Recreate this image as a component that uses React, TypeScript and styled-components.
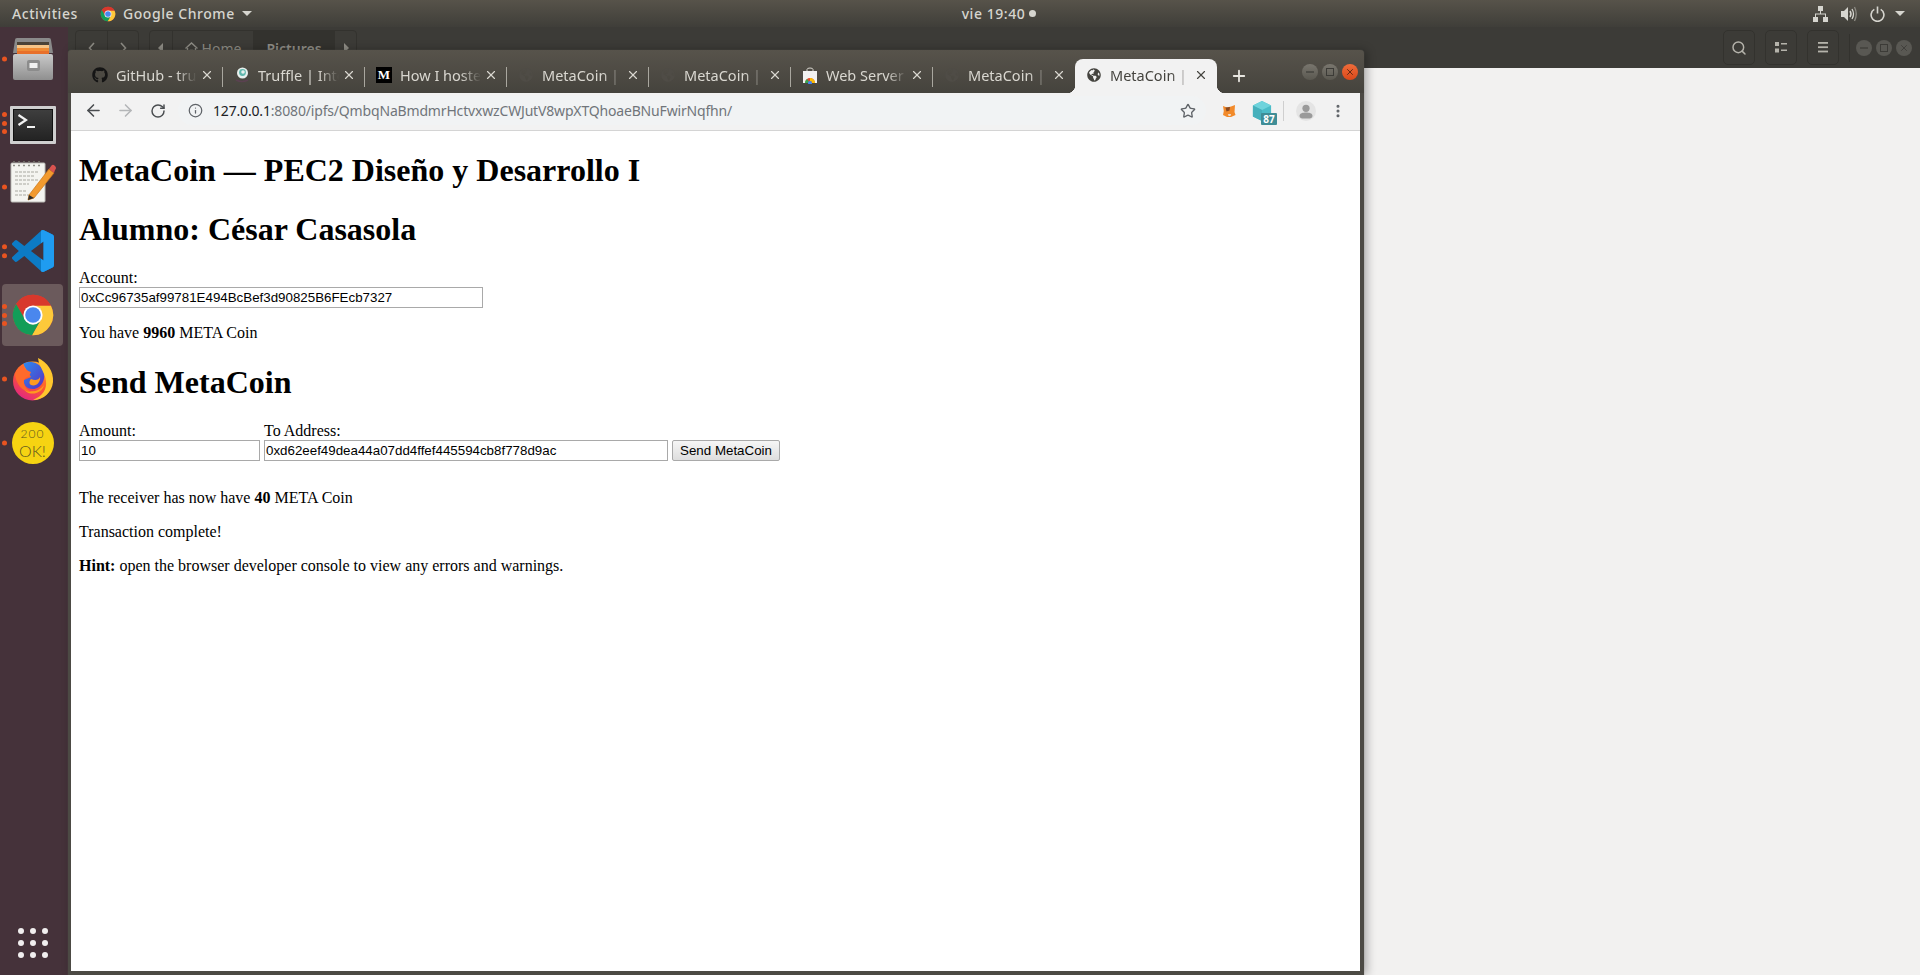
import { createGlobalStyle, styled } from 'styled-components';
import { FaGithub, FaGlobeAmericas } from 'react-icons/fa';
import { ArrowLeft, ArrowRight, RotateCw, Info, Star, X, Plus, Search, MoreVertical } from 'lucide-react';

const GlobalStyle = createGlobalStyle`
  html, body {
    margin: 0;
    padding: 0;
    height: 100%;
    overflow: hidden;
    background: #3c3b37;
  }
`

const UI_FONT = `"Noto Sans", Roboto, "Liberation Sans", sans-serif`

const Screen = styled.div`
  width: 1920px;
  height: 975px;
  display: flex;
  flex-direction: column;
  overflow: hidden;
  font-family: ${UI_FONT};
`

const TopBar = styled.div`
  height: 27px;
  flex: none;
  display: grid;
  grid-template-columns: 1fr auto 1fr;
  align-items: center;
  padding: 0 12px;
  background: linear-gradient(#57534a, #3f3e39);
  color: #d6d5cf;
  font-size: 14px;
  font-weight: 500;
  letter-spacing: 0.55px;
`

const TopLeft = styled.div`
  display: flex;
  align-items: center;
  gap: 7px;
`

const ActivitiesLabel = styled.span`
  width: 81px;
`

const TopCenter = styled.div`
  display: flex;
  align-items: center;
  gap: 4px;
  margin-left: 78px;
`

const RecordDot = styled.span`
  width: 7px;
  height: 7px;
  border-radius: 50%;
  background: #d6d5cf;
`

const TopRight = styled.div`
  display: flex;
  align-items: center;
  justify-content: flex-end;
  gap: 13px;
`

const Caret = styled.span`
  width: 0;
  height: 0;
  border-left: 5px solid transparent;
  border-right: 5px solid transparent;
  border-top: 5px solid #d6d5cf;
`

const TrayCaret = styled(Caret)`
  margin-left: -3px;
  margin-right: 3px;
`

const Desktop = styled.div`
  flex: 1;
  display: flex;
  min-height: 0;
`

const Dock = styled.nav`
  width: 68px;
  flex: none;
  display: flex;
  flex-direction: column;
  align-items: flex-start;
  padding-left: 2px;
  box-sizing: border-box;
  background: #45323a;
`

const DockItem = styled.div<{ $active?: boolean }>`
  position: relative;
  width: 61px;
  height: 62px;
  margin: 1px 0;
  flex: none;
  display: flex;
  align-items: center;
  justify-content: center;
  border-radius: 4px;
  background: ${p => (p.$active ? '#6b5a5c' : 'transparent')};
`

const DockIcon = styled.div<{ $shift?: number }>`
  display: flex;
  margin-top: ${p => p.$shift ?? 0}px;
`

const RunDots = styled.div`
  position: absolute;
  left: 0;
  top: 50%;
  transform: translateY(-50%);
  display: flex;
  flex-direction: column;
  gap: 3.5px;
`

const RunDot = styled.span`
  width: 5px;
  height: 5px;
  border-radius: 50%;
  background: #e95420;
`

const OkBadge = styled.div`
  width: 42px;
  height: 42px;
  border-radius: 50%;
  background: #f6d312;
  color: #5c5520;
  font-family: Lato, "Liberation Sans", sans-serif;
  font-weight: 300;
  display: flex;
  flex-direction: column;
  align-items: center;
  justify-content: center;
`

const OkSmall = styled.span`
  font-size: 12px;
  letter-spacing: 1px;
`

const OkBig = styled.span`
  font-size: 16px;
`

const AppGrid = styled.div`
  margin-top: auto;
  margin-bottom: 17px;
  margin-left: 16px;
  display: grid;
  grid-template-columns: repeat(3, 6px);
  gap: 6px;
`

const AppDot = styled.span`
  width: 6px;
  height: 6px;
  border-radius: 50%;
  background: #f1efef;
`

const DesktopArea = styled.main`
  position: relative;
  flex: 1;
  display: flex;
  flex-direction: column;
  min-width: 0;
`

const FilesHeader = styled.div`
  height: 41px;
  flex: none;
  display: flex;
  align-items: flex-start;
  padding: 3px 0 0 7px;
  box-sizing: border-box;
  background: #3c3b37;
`

const FilesGroup = styled.div<{ $gap?: number }>`
  height: 36px;
  display: flex;
  align-items: center;
  color: #8f8d86;
  font-size: 14px;
  margin-right: ${p => p.$gap ?? 0}px;
  border: 1px solid #33322e;
  border-radius: 4px;
  box-sizing: border-box;
`

const FilesCell = styled.div<{ $width: number; $selected?: boolean }>`
  width: ${p => p.$width}px;
  height: 100%;
  display: flex;
  align-items: center;
  justify-content: center;
  padding: 8px 0;
  box-sizing: border-box;
  gap: 4px;
  font-weight: ${p => (p.$selected ? 600 : 400)};
  background: ${p => (p.$selected ? '#33322e' : 'transparent')};
  border-left: 1px solid #33322e;
  &:first-child { border-left: none; }
`

const FilesTools = styled.div`
  margin-left: auto;
  display: flex;
  align-items: center;
  gap: 10px;
  padding-right: 8px;
`

const ToolButton = styled.div`
  width: 32px;
  height: 35px;
  display: flex;
  align-items: center;
  justify-content: center;
  border: 1px solid #33322e;
  border-radius: 5px;
  box-sizing: border-box;
`

const ToolDivider = styled.div`
  width: 1px;
  height: 28px;
  background: #33322e;
`

const FilesControls = styled.div`
  display: flex;
  gap: 4px;
  margin-left: -4px;
`

const FilesControl = styled.div`
  width: 16px;
  height: 16px;
  border-radius: 50%;
  background: #595853;
  display: flex;
  align-items: center;
  justify-content: center;
`

const FilesBody = styled.div`
  flex: 1;
  background: #f2f1f0;
`

const ChromeWindow = styled.section`
  position: absolute;
  left: 0;
  top: 23px;
  width: 1296px;
  height: 925px;
  display: flex;
  flex-direction: column;
  padding: 0 4px 4px 3px;
  box-sizing: border-box;
  background: linear-gradient(#57534b 0, #45433d 43px, #4c4a44 43px);
  border-radius: 4px 4px 0 0;
  box-shadow: 0 0 1px #6a675f, 3px 0 10px rgba(0, 0, 0, 0.3);
`

const TabStrip = styled.div`
  height: 43px;
  flex: none;
  display: flex;
  align-items: flex-end;
  padding-left: 10px;
`

const Tab = styled.div<{ $active?: boolean; $last?: boolean }>`
  position: relative;
  width: 142px;
  height: 34px;
  flex: none;
  display: flex;
  align-items: center;
  padding: 0 8px 2px 11px;
  box-sizing: border-box;
  border-radius: 8px 8px 0 0;
  background: ${p => (p.$active ? '#f2f2f2' : 'transparent')};
  color: ${p => (p.$active ? '#45443f' : '#d9d7d0')};
  font-size: 14.5px;
  &::after {
    content: '';
    display: ${p => (p.$active || p.$last ? 'none' : 'block')};
    position: absolute;
    right: 0;
    top: 8px;
    height: 20px;
    width: 1px;
    background: #a9a79f;
  }
  ${p => p.$active && `
    &::before {
      content: '';
      position: absolute;
      right: -8px;
      bottom: 0;
      width: 8px;
      height: 8px;
      background: radial-gradient(circle at 100% 0, transparent 8px, #f2f2f2 8.5px);
    }
  `}
`

const TabCurveLeft = styled.span`
  position: absolute;
  left: -8px;
  bottom: 0;
  width: 8px;
  height: 8px;
  background: radial-gradient(circle at 0 0, transparent 8px, #f2f2f2 8.5px);
`

const Favicon = styled.span`
  width: 16px;
  height: 16px;
  flex: none;
  display: flex;
  align-items: center;
  justify-content: center;
  margin-right: 8px;
`

const MediumMark = styled.span`
  width: 16px;
  height: 16px;
  background: #000;
  color: #fff;
  font-family: "Liberation Serif", serif;
  font-weight: 700;
  font-size: 13px;
  line-height: 16px;
  text-align: center;
`

const TabTitle = styled.span`
  flex: 1;
  min-width: 0;
  white-space: nowrap;
  overflow: hidden;
  -webkit-mask-image: linear-gradient(90deg, #000 75%, transparent 100%);
  mask-image: linear-gradient(90deg, #000 75%, transparent 100%);
`

const TabClose = styled.span`
  width: 16px;
  flex: none;
  display: flex;
  justify-content: center;
  margin-left: 2px;
`

const NewTab = styled.div`
  width: 44px;
  height: 34px;
  display: flex;
  align-items: center;
  justify-content: center;
  padding-bottom: 1px;
  box-sizing: border-box;
`

const WindowControls = styled.div`
  margin-left: auto;
  align-self: flex-start;
  margin-top: 14px;
  margin-right: 2px;
  display: flex;
  gap: 4px;
`

const WindowControl = styled.div<{ $close?: boolean }>`
  width: 16px;
  height: 16px;
  border-radius: 50%;
  display: flex;
  align-items: center;
  justify-content: center;
  background: ${p => (p.$close ? 'linear-gradient(#ef6c3a, #d9481a)' : 'linear-gradient(#79766e, #5a5850)')};
`

const Toolbar = styled.div`
  height: 35px;
  flex: none;
  display: flex;
  align-items: center;
  padding: 0 0 2px 7px;
  background: #f2f2f2;
  border-bottom: 1px solid #d4d4d4;
`

const NavButton = styled.div<{ $width: number }>`
  width: ${p => p.$width}px;
  height: 28px;
  flex: none;
  display: flex;
  align-items: center;
  justify-content: center;
`

const Omnibox = styled.div`
  width: 1028px;
  height: 29px;
  margin-left: 4px;
  flex: none;
  display: flex;
  align-items: center;
  padding: 0 10px;
  box-sizing: border-box;
  border-radius: 15px;
  background: #f1f3f4;
  font-size: 14px;
`

const UrlText = styled.span`
  margin-left: 10px;
  flex: 1;
  color: #70757a;
  letter-spacing: -0.17px;
  white-space: nowrap;
`

const UrlHost = styled.span`
  color: #202124;
`

const ExtensionSlot = styled.div<{ $left?: number }>`
  position: relative;
  width: 28px;
  height: 28px;
  flex: none;
  margin-left: ${p => p.$left ?? 0}px;
  display: flex;
  align-items: center;
  justify-content: center;
`

const CountBadge = styled.span`
  position: absolute;
  right: -1px;
  bottom: 0;
  width: 16px;
  height: 12px;
  border-radius: 1px;
  background: #3f8d96;
  color: #fff;
  font-size: 10px;
  font-weight: 700;
  line-height: 12px;
  text-align: center;
`

const ToolbarDivider = styled.div`
  width: 1px;
  height: 20px;
  margin-left: 7px;
  background: #cfcfcf;
`

const Page = styled.div`
  flex: 1;
  background: #fff;
  color: #000;
  padding: 0 8px;
  overflow: hidden;
  font-family: "Liberation Serif", "Times New Roman", serif;
  font-size: 16px;
  line-height: normal;
`

const Heading = styled.h1`
  font-size: 32px;
  font-weight: 700;
  margin: 21.44px 0;
`

const Paragraph = styled.p`
  margin: 16px 0;
`

const FieldLabel = styled.label`
  display: block;
`

const TextInput = styled.input<{ $width: number }>`
  display: block;
  width: ${p => p.$width}px;
  height: 21px;
  padding: 1px 2px 1px 1px;
  margin: 0;
  box-sizing: border-box;
  border: 1px solid #a9a9a9;
  border-radius: 0;
  background: #fff;
  color: #000;
  font-family: "Liberation Sans", Arial, sans-serif;
  font-size: 13.33px;
  outline: none;
`

const SendForm = styled.form`
  display: flex;
  align-items: flex-end;
  gap: 4px;
  margin-bottom: 28px;
`

const Field = styled.div``

const SendButton = styled.button`
  width: 108px;
  height: 21px;
  padding: 0;
  margin: 0;
  box-sizing: border-box;
  border: 1px solid #a9a9a9;
  border-radius: 2px;
  background: linear-gradient(#f6f6f6, #dedede);
  color: #000;
  font-family: "Liberation Sans", Arial, sans-serif;
  font-size: 13.33px;
`

const ChromeLogo = ({ size = 44 }: { size?: number }) => {
  const sector = 'M5.54 12.03A22 22 0 0 1 43.6 14L24 14A10 10 0 0 0 15.34 29Z'
  return <svg width={size} height={size} viewBox="0 0 48 48">
    <circle cx="24" cy="24" r="22" fill="#db4437" />
    <path d={sector} fill="#d8382c" />
    <path d={sector} fill="#fdc93a" transform="rotate(120 24 24)" />
    <path d={sector} fill="#129d58" transform="rotate(240 24 24)" />
    <circle cx="24" cy="24" r="10.5" fill="#fff" />
    <circle cx="24" cy="24" r="8.5" fill="#4a87ee" />
  </svg>
}

const CabinetIcon = () => (
  <svg width="42" height="44" viewBox="0 0 42 44">
    <defs>
      <linearGradient id="cab" x1="0" y1="0" x2="0" y2="1">
        <stop offset="0" stopColor="#c9c9c9" />
        <stop offset="1" stopColor="#8f8f8f" />
      </linearGradient>
    </defs>
    <path d="M3 3Q3 1 5 1H37Q39 1 39 3L41 16H1Z" fill="#8a8a8a" />
    <rect x="5" y="5" width="32" height="13" fill="#4b4237" />
    <rect x="5" y="8" width="32" height="3" fill="#f6c487" />
    <rect x="5" y="11" width="32" height="3" fill="#ef8b35" />
    <rect x="5" y="14" width="32" height="3" fill="#e8702a" />
    <rect x="1" y="17" width="40" height="26" rx="2" fill="url(#cab)" />
    <rect x="15" y="23" width="13" height="11" rx="2" fill="#8c8c8c" />
    <rect x="17.5" y="26" width="8" height="5" fill="#f0f0f0" />
  </svg>
)

const TerminalIcon = () => (
  <svg width="46" height="38" viewBox="0 0 46 38">
    <defs>
      <linearGradient id="term" x1="0" y1="0" x2="0" y2="1">
        <stop offset="0" stopColor="#3e3e3e" />
        <stop offset="1" stopColor="#232323" />
      </linearGradient>
    </defs>
    <rect x="0" y="0" width="46" height="38" rx="1" fill="#cfcfcf" />
    <rect x="3" y="3" width="40" height="32" fill="#111" />
    <rect x="4" y="4" width="38" height="30" fill="url(#term)" />
    <path d="M8.5 9L16 14L8.5 19" stroke="#f2f2f2" strokeWidth="2.2" fill="none" />
    <rect x="17" y="20" width="8" height="2" fill="#f2f2f2" />
  </svg>
)

const NotesIcon = () => (
  <svg width="46" height="46" viewBox="0 0 46 46">
    <rect x="1" y="5" width="34" height="39" rx="1" fill="#f4f4f0" stroke="#bdbdb8" />
    <g stroke="#77776f" strokeWidth="1.6" strokeDasharray="1.5 2.3">
      <path d="M4 3V9M9 3V9M14 3V9M19 3V9M24 3V9M29 3V9" />
    </g>
    <g stroke="#a8a8a0" strokeWidth="1">
      <path d="M5 14H29M5 18H25M5 22H28M5 26H19M5 33H16M5 37H21" strokeDasharray="3 1" />
    </g>
    <path d="M19 37L39 11L44 15L24 40L18 42Z" fill="#f29a2e" stroke="#c87618" strokeWidth="0.7" />
    <path d="M39 11L41.5 7.5Q43 6 45 8T45 12L44 15Z" fill="#d9534f" />
    <path d="M19 37L24 40L18 42Z" fill="#2a2a2a" />
  </svg>
)

const VSCODE_PATH = 'M23.15 2.587L18.21.21a1.494 1.494 0 0 0-1.705.29l-9.46 8.63-4.12-3.128a.999.999 0 0 0-1.276.057L.327 7.261A1 1 0 0 0 .326 8.74L3.899 12 .326 15.26a1 1 0 0 0 .001 1.479L1.65 17.94a.999.999 0 0 0 1.276.057l4.12-3.128 9.46 8.63a1.492 1.492 0 0 0 1.704.29l4.942-2.377A1.5 1.5 0 0 0 24 20.06V3.939a1.5 1.5 0 0 0-.85-1.352zm-5.146 14.861L10.826 12l7.178-5.448v10.896z'

const VsCodeIcon = () => (
  <svg width="42" height="42" viewBox="0 0 24 24">
    <defs>
      <clipPath id="vsRight"><rect x="16.6" y="0" width="8" height="24" /></clipPath>
    </defs>
    <path d={VSCODE_PATH} fill="#0c7bc5" />
    <path d={VSCODE_PATH} fill="#1f9cf0" clipPath="url(#vsRight)" />
  </svg>
)

const FirefoxIcon = () => (
  <svg width="44" height="44" viewBox="0 0 44 44">
    <defs>
      <linearGradient id="ffBody" x1="0.8" y1="0" x2="0.2" y2="1">
        <stop offset="0" stopColor="#ffb52e" />
        <stop offset="0.5" stopColor="#ff5a2b" />
        <stop offset="1" stopColor="#e0218a" />
      </linearGradient>
      <linearGradient id="ffGlobe" x1="0" y1="0" x2="1" y2="1">
        <stop offset="0" stopColor="#2a8cf0" />
        <stop offset="1" stopColor="#5a2fc0" />
      </linearGradient>
    </defs>
    <circle cx="21.5" cy="24" r="19.5" fill="url(#ffBody)" />
    <path d="M12 7C18 3 28 5 32 13C36 22 30 32 22 32C15 32 12 27 13 23L20 20Z" fill="url(#ffGlobe)" />
    <path d="M27 1C36 5 43 14 42 25C41 35 33 43 22 43C32 39 36 32 35 24C34 15 28 10 27 1Z" fill="#ffc72e" />
    <path d="M12 30C17 36 27 36 33 28C31 38 15 40 12 30Z" fill="#ff9a1f" />
    <path d="M4 17C6 11 10 8 13 7C12 10 14 13 20 15C19 19 15 20 13 23C12 27 15 33 21 35C11 35 5 27 4 17Z" fill="#ff6a2b" />
    <path d="M20 22C24 24 28 23 29 20C30 25 25 30 20 28C18 27 18 24 20 22Z" fill="#ff9a1f" />
  </svg>
)

const TruffleIcon = () => (
  <svg width="16" height="16" viewBox="0 0 16 16">
    <circle cx="8.5" cy="6" r="5.5" fill="#e8f0ee" />
    <circle cx="8.5" cy="5.5" r="3.4" fill="#5fb7ad" />
    <circle cx="9" cy="5" r="1.8" fill="#e8f0ee" />
    <path d="M2 13Q8 16 14 13" stroke="#5a4150" strokeWidth="1.4" fill="none" />
  </svg>
)

const WebStoreIcon = () => (
  <svg width="16" height="17" viewBox="0 0 16 17">
    <path d="M5 4V2.5Q5 1 8 1T11 2.5V4" stroke="#d9d7d0" fill="none" />
    <rect x="1" y="4" width="14" height="12" fill="#f2f2f2" />
    <path d="M3 16A5 5 0 0 1 13 16Z" fill="#e5492f" />
    <path d="M8 11A5 5 0 0 1 13 16H10A2 2 0 0 0 8 14Z" fill="#fbbc05" />
    <path d="M3 16A5 5 0 0 1 5 12L7 14.5A2 2 0 0 0 6 16Z" fill="#34a853" />
    <circle cx="8" cy="16" r="2" fill="#4285f4" />
  </svg>
)

const FoxIcon = () => (
  <svg width="14" height="14" viewBox="0 0 14 14">
    <path d="M1 2L5 3.5L9 2.5L13 1L12.5 8L13.5 11L9 13H5L1 11L1.8 7Z" fill="#f28a2a" />
    <path d="M3.5 3.5L8 3L7.5 6.5L4.5 7.5Z" fill="#8a4a20" />
    <path d="M6 10H9L8.5 12H6.5Z" fill="#f0dcc8" />
  </svg>
)

const CubeIcon = () => (
  <svg width="20" height="22" viewBox="0 0 22 24">
    <path d="M11 1L21 6V18L11 23L1 18V6Z" fill="#4cbcc8" />
    <path d="M11 1L21 6L11 11L1 6Z" fill="#6fd3dc" />
    <path d="M11 11V23L1 18V6Z" fill="#46b0bc" />
  </svg>
)

const AvatarIcon = () => (
  <svg width="20" height="20" viewBox="0 0 20 20">
    <circle cx="10" cy="10" r="10" fill="#e4e4e4" />
    <circle cx="10" cy="7.3" r="3.6" fill="#9a9a9a" />
    <path d="M3.5 15C3.5 12 7 11.5 10 11.5S16.5 12 16.5 15 13 17.5 10 17.5 3.5 18 3.5 15Z" fill="#9a9a9a" />
  </svg>
)

const NetworkIcon = () => (
  <svg width="15" height="16" viewBox="0 0 15 16" fill="#d6d5cf">
    <rect x="5" y="0" width="5" height="5" />
    <rect x="0" y="11" width="5" height="5" />
    <rect x="10" y="11" width="5" height="5" />
    <path d="M7 5H8V7.5H13V11H12V8.5H3V11H2V7.5H7Z" />
  </svg>
)

const VolumeIcon = () => (
  <svg width="16" height="16" viewBox="0 0 16 16">
    <path d="M0 5H3L7 1V15L3 11H0Z" fill="#d6d5cf" />
    <path d="M9 5Q11 8 9 11" stroke="#d6d5cf" strokeWidth="1.5" fill="none" />
    <path d="M11 3Q14 8 11 13" stroke="#d6d5cf" strokeWidth="1.3" fill="none" />
    <path d="M13.5 1Q17 8 13.5 15" stroke="#8d8b84" strokeWidth="1.3" fill="none" />
  </svg>
)

const PowerIcon = () => (
  <svg width="15" height="16" viewBox="0 0 15 16" fill="none" stroke="#d6d5cf" strokeWidth="1.6">
    <path d="M4.3 3.4A6.4 6.4 0 1 0 10.7 3.4" />
    <path d="M7.5 0.5V7.5" />
  </svg>
)

const FilesListIcon = () => (
  <svg width="13" height="11" viewBox="0 0 13 11" fill="#b5b3ab">
    <rect x="0" y="0" width="4" height="4" />
    <rect x="0" y="6.5" width="4" height="4" />
    <rect x="6" y="1" width="6" height="1.5" />
    <rect x="6" y="7.5" width="6" height="1.5" />
  </svg>
)

const FilesMenuIcon = () => (
  <svg width="11" height="11" viewBox="0 0 11 11" fill="#b5b3ab">
    <rect y="0" width="10" height="1.8" />
    <rect y="4.3" width="10" height="1.8" />
    <rect y="8.6" width="10" height="1.8" />
  </svg>
)

const HomeGlyph = () => (
  <svg width="13" height="13" viewBox="0 0 13 13" fill="none" stroke="#8f8d86" strokeWidth="1.4">
    <path d="M0.5 6.5L6.5 1L12.5 6.5" />
    <path d="M2.5 6V12H5.5V8.5H7.5V12H10.5V6" />
  </svg>
)

const Chevron = ({ dir }: { dir: 'left' | 'right' }) => (
  <svg width="8" height="12" viewBox="0 0 8 12" fill="none" stroke="#8f8d86" strokeWidth="1.6">
    <path d={dir === 'left' ? 'M6 1L1.5 6L6 11' : 'M2 1L6.5 6L2 11'} />
  </svg>
)

const SolidTriangle = ({ dir }: { dir: 'left' | 'right' }) => (
  <svg width="6" height="10" viewBox="0 0 6 10" fill="#8f8d86">
    <path d={dir === 'left' ? 'M5 0V10L0 5Z' : 'M1 0V10L6 5Z'} />
  </svg>
)

const MinGlyph = ({ color }: { color: string }) => (
  <svg width="10" height="10" viewBox="0 0 10 10"><path d="M1 5H9" stroke={color} strokeWidth="1.2" /></svg>
)

const MaxGlyph = ({ color }: { color: string }) => (
  <svg width="10" height="10" viewBox="0 0 10 10"><rect x="1.5" y="1.5" width="7" height="7" fill="none" stroke={color} /></svg>
)

type TabData = { title: string; icon: React.ReactNode; active?: boolean }

const fadedGlobe = <FaGlobeAmericas size={14} color="#4f4c46" />

const TABS: TabData[] = [
  { title: 'GitHub - truffle', icon: <FaGithub size={16} color="#151515" /> },
  { title: 'Truffle | Inte', icon: <TruffleIcon /> },
  { title: 'How I hoste', icon: <MediumMark>M</MediumMark> },
  { title: 'MetaCoin | D', icon: fadedGlobe },
  { title: 'MetaCoin | D', icon: fadedGlobe },
  { title: 'Web Server', icon: <WebStoreIcon /> },
  { title: 'MetaCoin | D', icon: fadedGlobe },
  { title: 'MetaCoin | D', icon: <FaGlobeAmericas size={14} color="#45443f" />, active: true },
]

const DOCK: { dots: number; shift?: number; active?: boolean; icon: React.ReactNode }[] = [
  { dots: 1, icon: <CabinetIcon /> },
  { dots: 3, shift: 4, icon: <TerminalIcon /> },
  { dots: 1, shift: -12, icon: <NotesIcon /> },
  { dots: 2, icon: <VsCodeIcon /> },
  { dots: 3, active: true, icon: <ChromeLogo /> },
  { dots: 1, icon: <FirefoxIcon /> },
  {
    dots: 1,
    icon: <OkBadge>
      <OkSmall>200</OkSmall>
      <OkBig>OK!</OkBig>
    </OkBadge>,
  },
]

export default function App() {
  return <Screen>
    <GlobalStyle />
    <TopBar>
      <TopLeft>
        <ActivitiesLabel>Activities</ActivitiesLabel>
        <ChromeLogo size={16} />
        <span>Google Chrome</span>
        <Caret />
      </TopLeft>
      <TopCenter>
        <span>vie 19:40</span>
        <RecordDot />
      </TopCenter>
      <TopRight>
        <NetworkIcon />
        <VolumeIcon />
        <PowerIcon />
        <TrayCaret />
      </TopRight>
    </TopBar>
    <Desktop>
      <Dock>
        {DOCK.map((item, i) => (
          <DockItem key={i} $active={item.active}>
            <RunDots>{Array.from({ length: item.dots }, (_, d) => <RunDot key={d} />)}</RunDots>
            <DockIcon $shift={item.shift}>{item.icon}</DockIcon>
          </DockItem>
        ))}
        <AppGrid>
          {Array.from({ length: 9 }, (_, i) => <AppDot key={i} />)}
        </AppGrid>
      </Dock>
      <DesktopArea>
        <FilesHeader>
          <FilesGroup $gap={10}>
            <FilesCell $width={31}><Chevron dir="left" /></FilesCell>
            <FilesCell $width={31}><Chevron dir="right" /></FilesCell>
          </FilesGroup>
          <FilesGroup>
            <FilesCell $width={22}><SolidTriangle dir="left" /></FilesCell>
            <FilesCell $width={81}><HomeGlyph />Home</FilesCell>
            <FilesCell $width={81} $selected>Pictures</FilesCell>
            <FilesCell $width={22}><SolidTriangle dir="right" /></FilesCell>
          </FilesGroup>
          <FilesTools>
            <ToolButton><Search size={16} color="#b5b3ab" strokeWidth={2.2} /></ToolButton>
            <ToolButton><FilesListIcon /></ToolButton>
            <ToolButton><FilesMenuIcon /></ToolButton>
            <ToolDivider />
            <FilesControls>
              <FilesControl><MinGlyph color="#3c3b37" /></FilesControl>
              <FilesControl><MaxGlyph color="#3c3b37" /></FilesControl>
              <FilesControl><X size={10} color="#3c3b37" /></FilesControl>
            </FilesControls>
          </FilesTools>
        </FilesHeader>
        <FilesBody />
        <ChromeWindow>
          <TabStrip>
            {TABS.map((tab, i) => (
              <Tab key={i} $active={tab.active} $last={i === TABS.length - 2}>
                {tab.active && <TabCurveLeft />}
                <Favicon>{tab.icon}</Favicon>
                <TabTitle>{tab.title}</TabTitle>
                <TabClose><X size={14} color={tab.active ? '#45443f' : '#d9d7d0'} strokeWidth={2} /></TabClose>
              </Tab>
            ))}
            <NewTab><Plus size={18} color="#e8e6e0" strokeWidth={2.4} /></NewTab>
            <WindowControls>
              <WindowControl><MinGlyph color="#3c3b37" /></WindowControl>
              <WindowControl><MaxGlyph color="#3c3b37" /></WindowControl>
              <WindowControl $close><X size={10} color="#4a2010" strokeWidth={2} /></WindowControl>
            </WindowControls>
          </TabStrip>
          <Toolbar>
            <NavButton $width={31}><ArrowLeft size={19} color="#4a4d50" strokeWidth={2} /></NavButton>
            <NavButton $width={32}><ArrowRight size={19} color="#b4b6b8" strokeWidth={2} /></NavButton>
            <NavButton $width={33}><RotateCw size={16} color="#4a4d50" strokeWidth={2.2} /></NavButton>
            <Omnibox>
              <Info size={15} color="#5f6368" strokeWidth={2} />
              <UrlText><UrlHost>127.0.0.1</UrlHost>:8080/ipfs/QmbqNaBmdmrHctvxwzCWJutV8wpXTQhoaeBNuFwirNqfhn/</UrlText>
              <Star size={16} color="#5f6368" strokeWidth={2} />
            </Omnibox>
            <ExtensionSlot $left={9}><FoxIcon /></ExtensionSlot>
            <ExtensionSlot $left={5}><CubeIcon /><CountBadge>87</CountBadge></ExtensionSlot>
            <ToolbarDivider />
            <ExtensionSlot $left={8}><AvatarIcon /></ExtensionSlot>
            <ExtensionSlot $left={4}><MoreVertical size={16} color="#5f6368" strokeWidth={2.6} /></ExtensionSlot>
          </Toolbar>
          <Page>
            <Heading>MetaCoin — PEC2 Diseño y Desarrollo I</Heading>
            <Heading>Alumno: César Casasola</Heading>
            <FieldLabel htmlFor="account">Account:</FieldLabel>
            <TextInput id="account" $width={404} readOnly value="0xCc96735af99781E494BcBef3d90825B6FEcb7327" />
            <Paragraph>You have <b>9960</b> META Coin</Paragraph>
            <Heading>Send MetaCoin</Heading>
            <SendForm onSubmit={e => e.preventDefault()}>
              <Field>
                <FieldLabel htmlFor="amount">Amount:</FieldLabel>
                <TextInput id="amount" $width={181} readOnly value="10" />
              </Field>
              <Field>
                <FieldLabel htmlFor="receiver">To Address:</FieldLabel>
                <TextInput id="receiver" $width={404} readOnly value="0xd62eef49dea44a07dd4ffef445594cb8f778d9ac" />
              </Field>
              <SendButton type="submit">Send MetaCoin</SendButton>
            </SendForm>
            <Paragraph>The receiver has now have <b>40</b> META Coin</Paragraph>
            <Paragraph>Transaction complete!</Paragraph>
            <Paragraph><b>Hint:</b> open the browser developer console to view any errors and warnings.</Paragraph>
          </Page>
        </ChromeWindow>
      </DesktopArea>
    </Desktop>
  </Screen>
}
